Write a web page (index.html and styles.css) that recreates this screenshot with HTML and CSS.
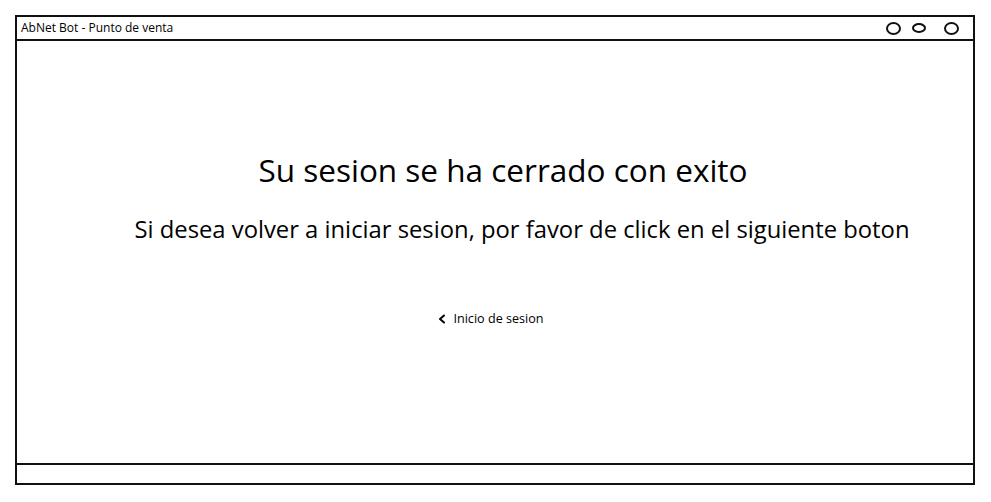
FILE: index.html
```html
<!DOCTYPE html>
<html lang="es">
<head>
<meta charset="utf-8">
<title>AbNet Bot - Punto de venta</title>
<link rel="stylesheet" href="styles.css">
</head>
<body>
<div class="window">
  <div class="titlebar">
    <span class="title">AbNet Bot - Punto de venta</span>
    <div class="controls">
      <span class="dot"></span>
      <span class="dot dot-flat"></span>
      <span class="dot dot-last"></span>
    </div>
  </div>
  <div class="content">
    <h1 class="heading">Su sesion se ha cerrado con exito</h1>
    <p class="sub">Si desea volver a iniciar sesion, por favor de click en el siguiente boton</p>
    <a class="link" href="#">
      <svg class="chev" width="8" height="10" viewBox="0 0 8 10"><path d="M6 1.5 L2 5 L6 8.5" fill="none" stroke="#000" stroke-width="2" stroke-linecap="round" stroke-linejoin="round"/></svg>
      <span>Inicio de sesion</span>
    </a>
  </div>
  <div class="statusbar"></div>
</div>
</body>
</html>
```

FILE: styles.css
```css
html, body {
  margin: 0;
  padding: 0;
  background: #fff;
}
body {
  font-family: "Open Sans", "Liberation Sans", sans-serif;
  color: #000;
}
.window {
  margin: 15px 0 0 15px;
  width: 960px;
  height: 470px;
  box-sizing: border-box;
  border: 2px solid #111;
  display: flex;
  flex-direction: column;
}
.titlebar {
  height: 24px;
  box-sizing: border-box;
  border-bottom: 2px solid #111;
  display: flex;
  align-items: center;
  justify-content: space-between;
  padding: 0 14px 0 4px;
}
.title {
  font-size: 12px;
  line-height: 1;
}
.controls {
  display: flex;
  align-items: center;
}
.dot {
  width: 11px;
  height: 9px;
  border: 2px solid #111;
  border-radius: 50%;
}
.dot-flat {
  width: 10px;
  height: 6px;
  margin-left: 11px;
}
.dot-last {
  margin-left: 18px;
}
.content {
  flex: 1;
  display: flex;
  flex-direction: column;
  align-items: center;
  padding-top: 109px;
}
.heading {
  margin: 0 0 0 16px;
  font-weight: 400;
  font-size: 31.5px;
  line-height: 40px;
}
.sub {
  margin: 24px 0 0 54px;
  font-size: 23.8px;
  line-height: 30px;
}
.link {
  margin-top: 67px;
  display: flex;
  align-items: center;
  gap: 7px;
  color: #000;
  text-decoration: none;
  font-size: 12.6px;
  line-height: 16px;
  margin-left: -8px;
}
.statusbar {
  height: 20px;
  box-sizing: border-box;
  border-top: 2px solid #111;
}
```
